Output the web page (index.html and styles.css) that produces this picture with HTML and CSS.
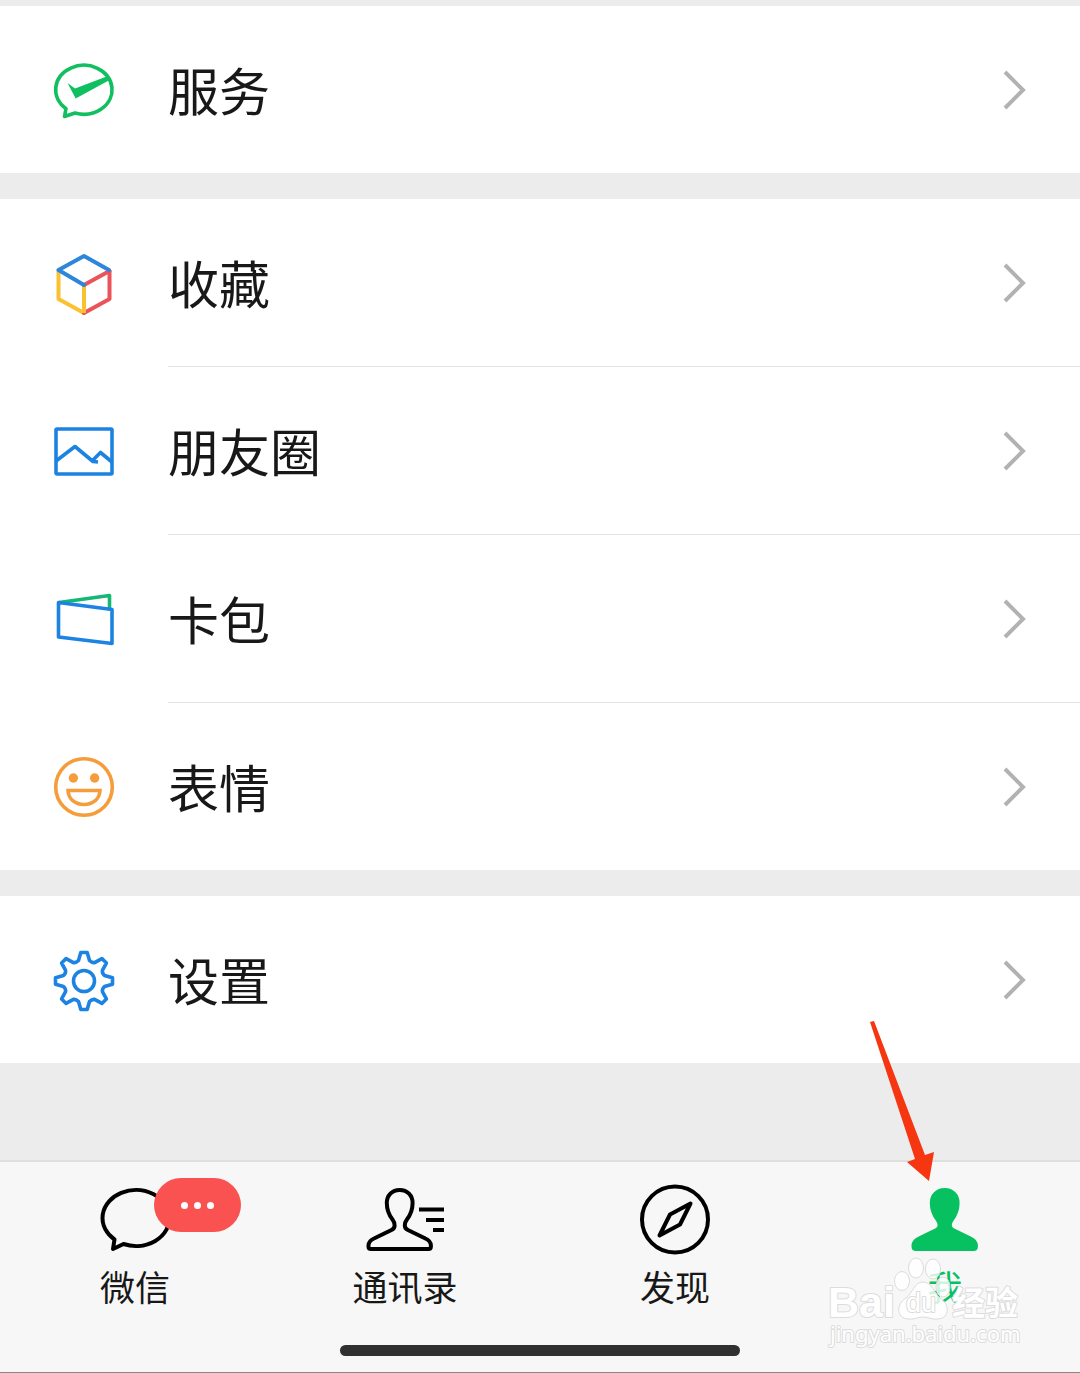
FILE: index.html
```html
<!DOCTYPE html>
<html lang="zh-CN">
<head>
  <meta charset="UTF-8" />
  <meta name="viewport" content="width=device-width, initial-scale=1.0"/>
  <title>我</title>
  <link rel="stylesheet" href="styles.css">
</head>
<body>

<svg class="defs" aria-hidden="true">
  <symbol id="chevron" viewBox="0 0 24 42">
    <path d="M3 3 L21 21 L3 39" fill="none" stroke="#b2b2b2" stroke-width="4"/>
  </symbol>
  <symbol id="person" viewBox="0 0 80 72">
    <path d="M34.700 6 C27 6 21.800 11.500 21.800 19 C21.800 27 24 31 27.500 35.500 C30.500 39.500 30.500 44 26.500 46 L9 54.500 C4.500 56.500 3.500 58.500 3.500 61.500 V62.500 Q3.500 65 6 65 H63.400 Q65.900 65 65.900 62.500 V61.500 C65.900 58.500 64.900 56.500 60.400 54.500 L42.900 46 C38.900 44 38.900 39.500 41.900 35.500 C45.400 31 47.600 27 47.600 19 C47.600 11.500 42.400 6 34.700 6 Z" stroke-width="4"/>
  </symbol>
</svg>

<main>
  <ul class="group">
    <li>
      <a class="row" href="#">
        <svg class="icon" viewBox="0 0 64 64" fill="none" stroke="#10bf60" stroke-width="3.600" stroke-linejoin="round">
          <path d="M14 50.700 A28.200 24.500 0 1 1 23 55 L12.500 58.500 Z"/>
          <path d="M15.500 25 L23 30.500 L56 18 L58.500 21.500 L23.700 40.500 Z" fill="#10bf60" stroke="none"/>
        </svg>
        <span class="cell">服务 <svg class="chevron"><use href="#chevron"/></svg></span>
      </a>
    </li>
  </ul>

  <ul class="group">
    <li>
      <a class="row" href="#">
        <svg class="icon" viewBox="0 0 64 64" fill="none" stroke-width="4" stroke-linejoin="round" stroke-linecap="round">
          <path d="M6.500 20 V48 L32 62" stroke="#fac230"/>
          <path d="M32 62 L57.500 48 V20" stroke="#eb5259"/>
          <path d="M32 34 V62" stroke="#fac230" stroke-linecap="butt"/>
          <path d="M32 34 L57.500 20" stroke="#eb5259"/>
          <path d="M57 19 L32 5 L6.500 19 L32 34" stroke="#2c86dc"/>
        </svg>
        <span class="cell">收藏 <svg class="chevron"><use href="#chevron"/></svg></span>
      </a>
    </li>
    <li>
      <a class="row" href="#">
        <svg class="icon" viewBox="0 0 64 64" fill="none" stroke="#1d83e2" stroke-width="3.600" stroke-linejoin="round">
          <rect x="4" y="11" width="56" height="45" rx="1"/>
          <path d="M4 43 L23 28.500 L41 43.500 L46 44 M40 43 L48.500 34.500 L60 44"/>
        </svg>
        <span class="cell">朋友圈 <svg class="chevron"><use href="#chevron"/></svg></span>
      </a>
    </li>
    <li>
      <a class="row" href="#">
        <svg class="icon" viewBox="0 0 64 64" fill="none" stroke-width="3.600" stroke-linejoin="round">
          <path d="M7 16.500 L57.500 9.500 V23" stroke="#14b874"/>
          <path d="M6.500 16.500 L60 23.500 V57.500 L6.500 51 Z" stroke="#1d83e2"/>
        </svg>
        <span class="cell">卡包 <svg class="chevron"><use href="#chevron"/></svg></span>
      </a>
    </li>
    <li>
      <a class="row" href="#">
        <svg class="icon" viewBox="0 0 64 64" fill="none" stroke="#f59d3b" stroke-width="3.600">
          <circle cx="32" cy="33" r="28.300"/>
          <circle cx="21.400" cy="24" r="4.700" fill="#f59d3b" stroke="none"/>
          <circle cx="42.600" cy="24" r="4.700" fill="#f59d3b" stroke="none"/>
          <path d="M16 36.500 H48 C47.500 45 41 50.500 32 50.500 C23 50.500 16.500 45 16 36.500 Z"/>
        </svg>
        <span class="cell">表情 <svg class="chevron"><use href="#chevron"/></svg></span>
      </a>
    </li>
  </ul>

  <ul class="group">
    <li>
      <a class="row" href="#">
        <svg class="icon" viewBox="0 0 64 64" fill="none" stroke="#1d83e2" stroke-width="3.600" stroke-linejoin="round">
          <g transform="translate(32 33)">
            <circle r="10.500"/>
            <path d="M-3.200 -28.500 L3.200 -28.500 L5.500 -20.500 Q8 -18 10.600 -18.400 L17.900 -22.400 L22.400 -17.900 L18.400 -10.600 Q18 -8 20.500 -5.500 L28.500 -3.200 L28.500 3.200 L20.500 5.500 Q18 8 18.400 10.600 L22.400 17.900 L17.900 22.400 L10.600 18.400 Q8 18 5.500 20.500 L3.200 28.500 L-3.200 28.500 L-5.500 20.500 Q-8 18 -10.600 18.400 L-17.900 22.400 L-22.400 17.900 L-18.400 10.600 Q-18 8 -20.500 5.500 L-28.500 3.200 L-28.500 -3.200 L-20.500 -5.500 Q-18 -8 -18.400 -10.600 L-22.400 -17.900 L-17.900 -22.400 L-10.600 -18.400 Q-8 -18 -5.500 -20.500 Z"/>
          </g>
        </svg>
        <span class="cell">设置 <svg class="chevron"><use href="#chevron"/></svg></span>
      </a>
    </li>
  </ul>
</main>

<footer>
  <nav>
    <a class="tab" href="#">
      <span class="tab-icon">
        <svg viewBox="0 0 80 72" fill="none" stroke="#000" stroke-width="4" stroke-linejoin="round">
          <path d="M19.500 55.500 A33.500 28 0 1 1 28.500 60 L18 65 Z"/>
        </svg>
        <span class="badge"><i></i><i></i><i></i></span>
      </span>
      微信
    </a>
    <a class="tab" href="#">
      <span class="tab-icon">
        <svg viewBox="0 0 80 72" fill="none" stroke="#000" stroke-width="4">
          <use href="#person"/>
          <path d="M54 25.500 H79 M61 36 H79 M68 46 H79"/>
        </svg>
      </span>
      通讯录
    </a>
    <a class="tab" href="#">
      <span class="tab-icon">
        <svg viewBox="0 0 80 72" fill="none" stroke="#000" stroke-width="4" stroke-linejoin="round">
          <circle cx="40" cy="35.500" r="33"/>
          <path d="M55.500 19.500 L35 30.500 L24.500 51.500 L45 40.500 Z"/>
        </svg>
      </span>
      发现
    </a>
    <a class="tab active" href="#">
      <span class="tab-icon">
        <svg viewBox="0 0 80 72" fill="#07c160" stroke="#07c160">
          <use href="#person" x="5"/>
        </svg>
        <svg class="arrow" viewBox="0 0 66 162">
          <path d="M1 2 L5 1 L56 135 L65 132 L60 161 L38 142 L46 139 Z" fill="#f63511"/>
        </svg>
      </span>
      我
    </a>
  </nav>
  <div class="home-bar"></div>

  <svg class="watermark" viewBox="0 0 200 96">
    <g>
      <ellipse cx="76" cy="25" rx="7.500" ry="9.500"/>
      <ellipse cx="90" cy="12" rx="7.500" ry="10"/>
      <ellipse cx="107" cy="13" rx="7.500" ry="10"/>
      <ellipse cx="117" cy="31" rx="7" ry="10"/>
      <path d="M97 26 C88 26 87 37 80 42 C70 48 70 62 82 63 C88 64 91 61 97 61 C103 61 106 64 112 63 C124 62 124 48 114 42 C108 37 106 26 97 26 Z"/>
    </g>
    <text class="wm-bai" x="2" y="61">Bai</text>
    <text class="wm-du" x="80" y="56">du</text>
    <text class="wm-cn" x="126" y="59">经验</text>
    <text class="wm-url" x="4" y="86">jingyan.baidu.com</text>
  </svg>
</footer>

</body>
</html>
```
FILE: styles.css
```css
:root {
  --fondo: #ececec;
  --texto: #181818;
  --verde: #07c160;
}

* {
  box-sizing: border-box;
}

body {
  margin: 0;
  min-height: 100vh;
  display: flex;
  flex-direction: column;
  background-color: var(--fondo);
  color: var(--texto);
  font-family: "Noto Sans CJK SC", sans-serif;
}

a {
  color: inherit;
  text-decoration: none;
}

svg {
  display: block;
}

.defs {
  position: absolute;
  width: 0;
  height: 0;
}

main {
  flex: 1;
  display: flex;
  flex-direction: column;
  gap: 26px;
  padding: 6px 0 97px;
}

.group {
  margin: 0;
  padding: 0;
  list-style: none;
  background-color: white;
}

.row {
  display: flex;
  align-items: center;
  gap: 52px;
  padding-left: 52px;
}

.icon {
  width: 64px;
  height: 64px;
  flex: none;
}

.cell {
  flex: 1;
  display: flex;
  align-items: center;
  justify-content: space-between;
  padding-right: 54px;
  font-size: 51px;
  line-height: 167px;
}

li + li .cell {
  border-top: 1px solid #e4e4e4;
}

.chevron {
  width: 24px;
  height: 42px;
}

footer {
  position: relative;
  padding: 22px 0 16px;
  background-color: #f7f7f7;
  border-top: 2px solid #dfdfdf;
  border-bottom: 1px solid #888;
}

nav {
  display: grid;
  grid-template-columns: repeat(4, 1fr);
}

.tab {
  display: flex;
  flex-direction: column;
  align-items: center;
  gap: 5px;
  font-size: 35px;
  line-height: 50px;
}

.tab.active {
  color: var(--verde);
}

.tab-icon {
  position: relative;
  width: 80px;
  height: 72px;
}

.badge {
  position: absolute;
  left: 59px;
  top: -6px;
  width: 87px;
  height: 54px;
  border-radius: 27px;
  background-color: #fa5151;
  display: flex;
  align-items: center;
  justify-content: center;
  gap: 6px;
}

.badge i {
  width: 7px;
  height: 7px;
  border-radius: 50%;
  background-color: white;
}

.arrow {
  position: absolute;
  right: 50px;
  bottom: 74px;
  width: 66px;
  height: 162px;
}

.home-bar {
  width: 37%;
  height: 11px;
  margin: 34px auto 0;
  border-radius: 6px;
  background-color: #303030;
}

.watermark {
  position: absolute;
  right: 54px;
  bottom: 20px;
  width: 200px;
  height: 96px;
  overflow: visible;
  fill: rgba(255, 255, 255, 0.8);
  stroke: #dcdcdc;
  stroke-width: 1px;
  font-family: "Liberation Sans", sans-serif;
}

.watermark text {
  fill: white;
  stroke-width: 2px;
  stroke-linejoin: round;
  paint-order: stroke;
}

.wm-bai {
  font-size: 43px;
  font-weight: bold;
}

.wm-du {
  font-size: 27px;
}

.wm-cn {
  font-family: "Noto Sans CJK SC", sans-serif;
  font-size: 33px;
  font-weight: bold;
}

.wm-url {
  font-family: "Noto Sans", sans-serif;
  font-size: 22px;
}
```
